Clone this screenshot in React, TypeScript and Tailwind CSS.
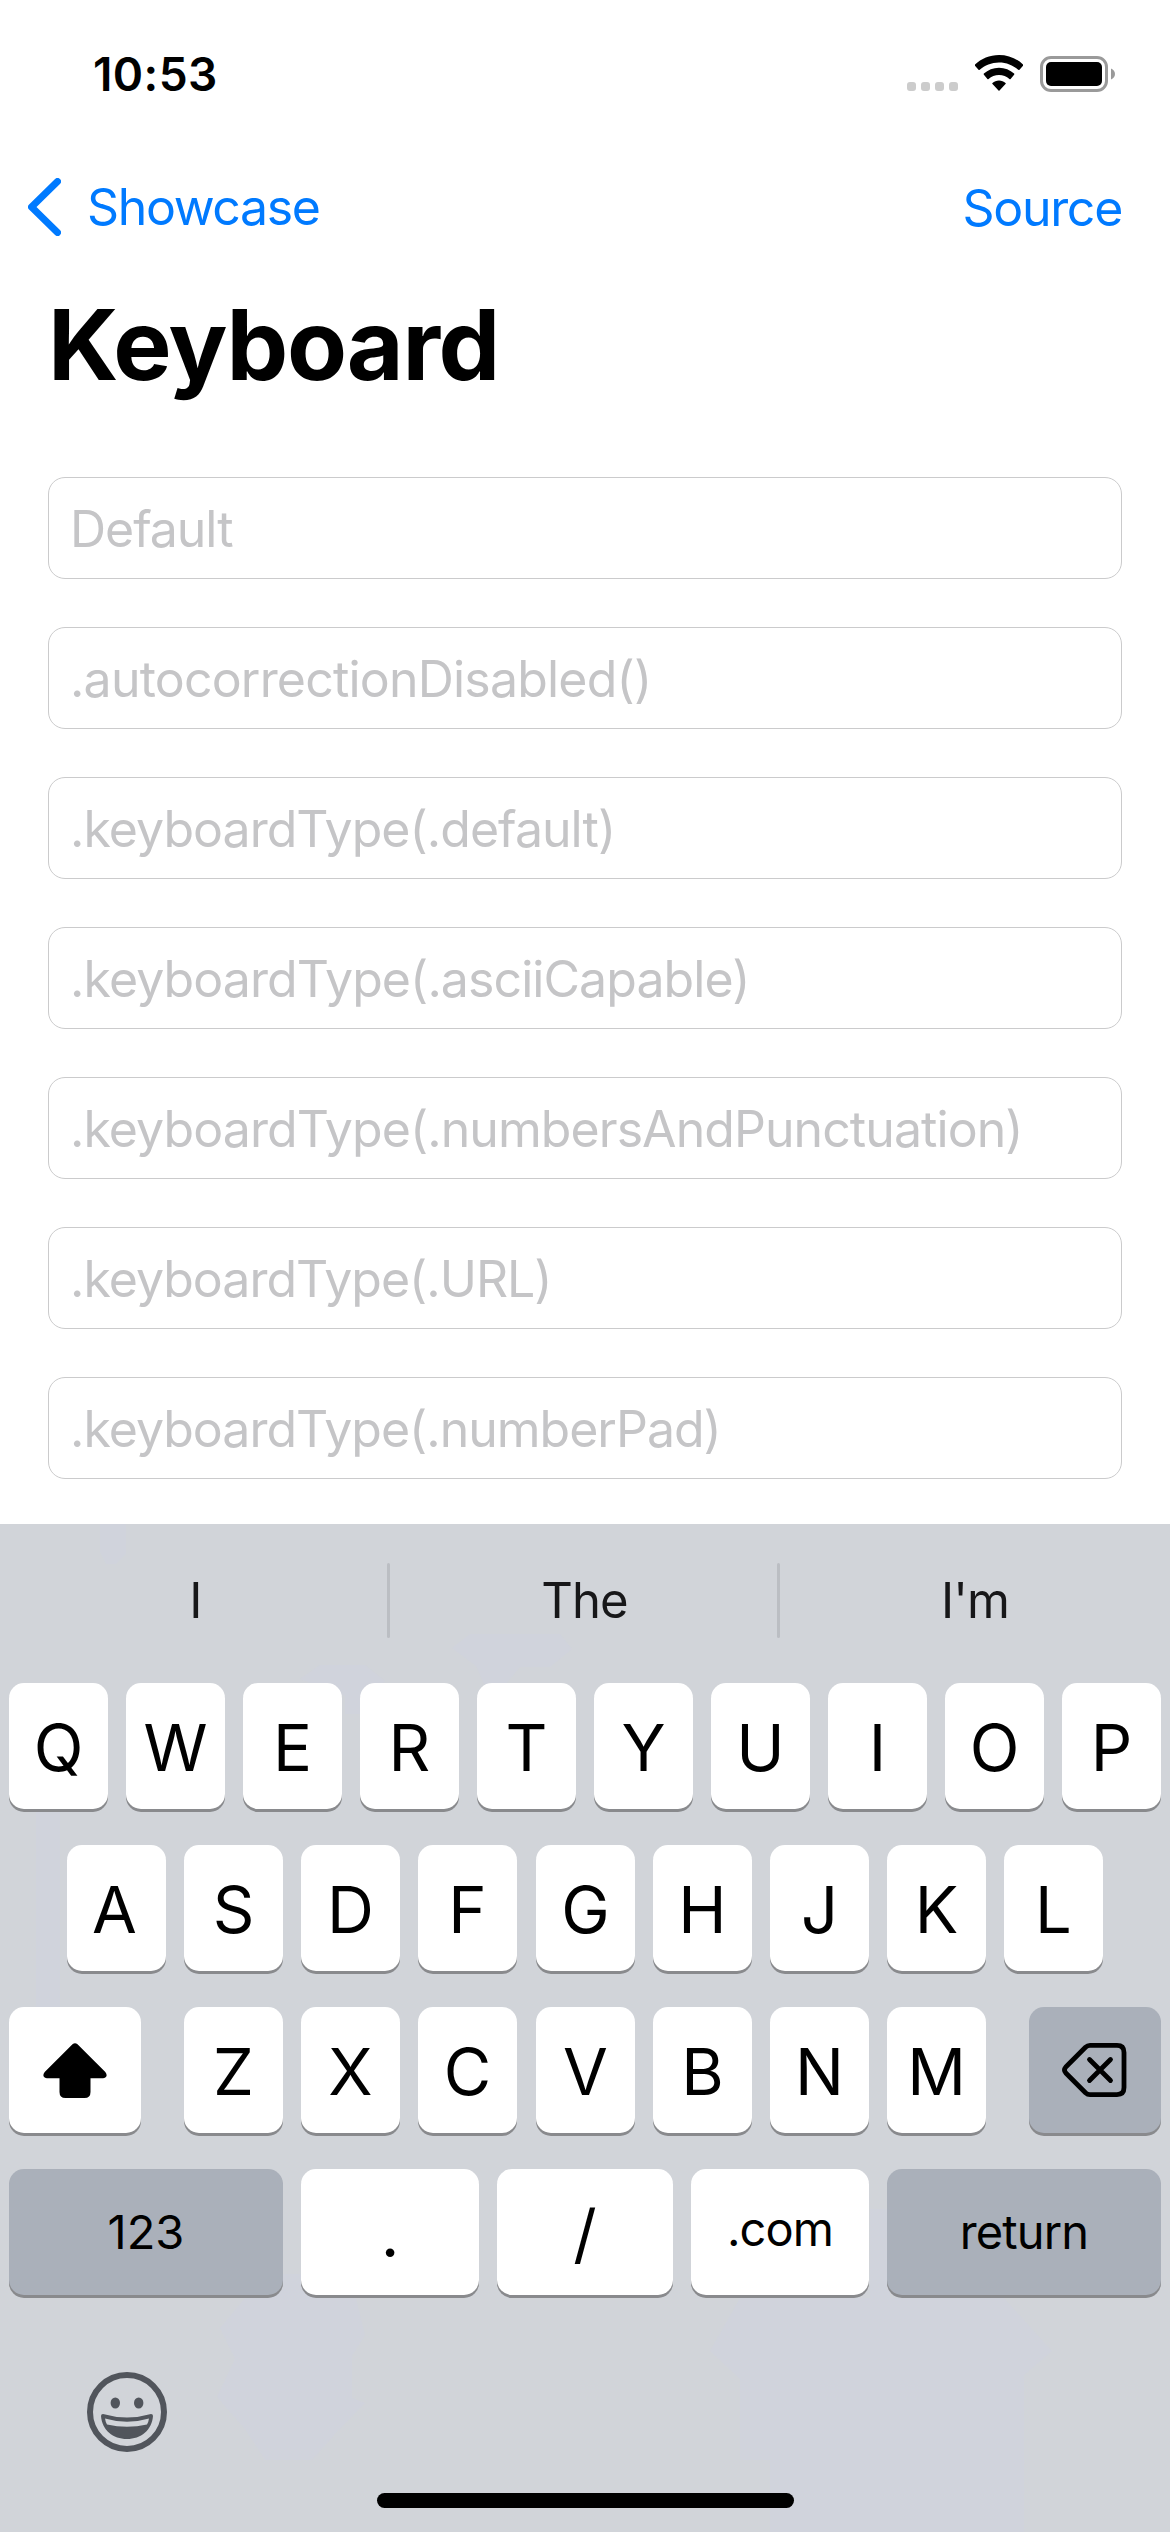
import React from "react";

const fields = [
  { label: "Default", cls: "tracking-[-1.05px]" },
  { label: ".autocorrectionDisabled()", cls: "tracking-[-0.8px]" },
  { label: ".keyboardType(.default)", cls: "tracking-[-0.96px]" },
  { label: ".keyboardType(.asciiCapable)", cls: "tracking-[-0.92px]" },
  { label: ".keyboardType(.numbersAndPunctuation)", cls: "tracking-[-0.93px]" },
  { label: ".keyboardType(.URL)", cls: "tracking-[-1px]" },
  { label: ".keyboardType(.numberPad)", cls: "tracking-[-1px]" },
];

const keyBase =
  "flex h-[126px] shrink-0 items-center justify-center rounded-[15px] shadow-[0_3px_0_#898a8d] text-black leading-none";

function Key({ children, className = "w-[99px]" }: { children: React.ReactNode; className?: string }) {
  return (
    <div className={`${keyBase} bg-white pt-[2px] text-[65px] ${className}`}>
      <span>{children}</span>
    </div>
  );
}

function WifiIcon() {
  return (
    <svg width="48" height="36" viewBox="0 0 48 36" className="mt-[55px] ml-[17px] shrink-0">
      <path d="M24 0C33.300 0 41.800 3.600 48 9.500Q48.600 10.100 48 10.700L44.500 14.800Q43.900 15.400 43.300 14.800C38.200 10.200 31.500 7.400 24 7.400S9.800 10.200 4.700 14.800Q4.100 15.400 3.500 14.800L0 10.700Q-.6 10.100 0 9.500C6.200 3.600 14.700 0 24 0Z" />
      <path d="M24 12.800C29.800 12.800 35.100 15 39.100 18.600Q39.700 19.200 39.100 19.800L35.600 23.900Q35 24.500 34.400 23.900C31.600 21.500 28 20 24 20S16.400 21.500 13.600 23.900Q13 24.500 12.400 23.900L8.900 19.800Q8.300 19.200 8.900 18.600C12.900 15 18.200 12.800 24 12.800Z" />
      <path d="M24 25.500C26.500 25.500 28.800 26.400 30.500 27.900Q31.100 28.500 30.500 29.100L24.500 35.600Q24 36.100 23.500 35.600L17.500 29.100Q16.900 28.500 17.500 27.900C19.200 26.400 21.500 25.500 24 25.500Z" />
    </svg>
  );
}

function BatteryIcon() {
  return (
    <svg width="76" height="36" viewBox="0 0 76 36" className="mt-[56px] ml-[17px] shrink-0">
      <rect x="1.500" y="1.500" width="65" height="33" rx="9.500" fill="none" stroke="#9a9a9a" strokeWidth="3" />
      <rect x="6" y="6" width="56" height="24" rx="5" />
      <path d="M71 12.500C73.500 13.500 75 15.500 75 18S73.500 22.500 71 23.500Z" fill="#9a9a9a" />
    </svg>
  );
}

export default function App() {
  return (
    <div className="flex h-[2532px] w-[1170px] flex-col overflow-hidden bg-white font-['Inter',sans-serif]">
      <div className="flex h-[132px] shrink-0">
        <div className="mt-[46px] ml-[93px] w-[814px] text-[46px] leading-[56px] font-semibold tracking-[0.4px]">10:53</div>
        <div className="mt-[82px] flex gap-[5px]">
          {[0, 1, 2, 3].map((i) => (
            <span key={i} className="h-[9px] w-[9px] rounded-[3px] bg-[#cccccc]" />
          ))}
        </div>
        <WifiIcon />
        <BatteryIcon />
      </div>

      <div className="flex h-[132px] shrink-0 items-start justify-between pr-[48px] pl-[28px] text-[50px] leading-[60px] text-[#007aff]">
        <div className="flex items-start">
          <svg width="33" height="58" viewBox="0 0 33 58" className="mt-[46px]">
            <path d="M29.500 3.500L3.500 29L29.500 54.500" fill="none" stroke="#007aff" strokeWidth="7" strokeLinecap="round" strokeLinejoin="round" />
          </svg>
          <span className="mt-[45px] ml-[26px] tracking-[-1.35px]">Showcase</span>
        </div>
        <span className="mt-[46px] tracking-[-1.3px]">Source</span>
      </div>

      <h1 className="mt-[21px] ml-[48px] h-[120px] shrink-0 text-[98px] leading-[120px] font-bold tracking-[-1.3px]">Keyboard</h1>

      <div className="mt-[72px] flex h-[1047px] shrink-0 flex-col gap-[48px] px-[48px]">
        {fields.map((f) => (
          <div key={f.label} className="flex h-[102px] shrink-0 items-center rounded-[17px] border border-[#cbcbcc] pt-[2px] pl-[21px] text-[50px] leading-[60px] text-[#c5c5c7]">
            <span className={f.cls}>{f.label}</span>
          </div>
        ))}
      </div>

      <div className="relative isolate flex h-[1008px] shrink-0 flex-col overflow-hidden bg-[#d1d4d9]">
        <svg width="1170" height="1008" viewBox="0 0 1170 1008" className="absolute inset-0 -z-10" fill="#d0d3dc">
          <path d="M100 0H126V30L116 40H106L100 28Z" />
          <path d="M452 124L470 110H560L572 125L550 143H520L506 160H484L476 142Z" />
          <path d="M300 155L320 141H365L385 157L370 172V190H345V172Z" />
          <path d="M36 288H60V485H36Z" />
          <path d="M220 804L245 774L270 750H350L365 811L352 832V874L365 879L335 910L312 936H265L245 905L217 873L235 835Z" />
          <path d="M870 685H890V774H1004L1052 827L1024 851V1008H770V936H740V855L710 827L740 774H870Z" />
        </svg>

        <div className="flex h-[159px] shrink-0 items-start pt-[39px] text-[49px] leading-[60px] tracking-[-0.9px] text-[#171719]">
          <span className="mt-[8px] flex w-[387px] justify-center pl-[4px]">I</span>
          <span className="h-[75px] w-[3px] rounded-full bg-[#bbbec3]" />
          <span className="mt-[8px] flex w-[387px] justify-center pl-[2px]">The</span>
          <span className="h-[75px] w-[3px] rounded-full bg-[#bbbec3]" />
          <span className="mt-[8px] flex w-[390px] justify-center">I'm</span>
        </div>

        <div className="flex flex-col gap-[36px]">
          <div className="flex gap-[18px] px-[9px]">
            {"QWERTYUIOP".split("").map((k) => (
              <Key key={k}>{k}</Key>
            ))}
          </div>
          <div className="flex gap-[18px] pl-[67px]">
            {"ASDFGHJKL".split("").map((k) => (
              <Key key={k} className={k === "G" ? "ml-px w-[99px]" : k === "A" ? "w-[99px] pr-[4px]" : "w-[99px]"}>{k}</Key>
            ))}
          </div>
          <div className="flex justify-between px-[9px]">
            <div className={`${keyBase} w-[132px] bg-white`}>
              <svg width="64" height="55" viewBox="0 0 64 55">
                <path d="M29.500 1.300Q32 -.8 34.500 1.300L62.300 29Q65 32.500 62.300 34.500Q61.300 35.200 60 35.200H47.500V49Q47.500 55 41.500 55H22.500Q16.500 55 16.500 49V35.200H4Q2.700 35.200 1.700 34.500Q-1 32.500 1.700 29Z" />
              </svg>
            </div>
            <div className="flex gap-[18px]">
              {"ZXCVBNM".split("").map((k) => (
                <Key key={k} className={k === "V" ? "ml-px w-[99px]" : "w-[99px]"}>{k}</Key>
              ))}
            </div>
            <div className={`${keyBase} w-[132px] bg-[#aab0ba]`}>
              <svg width="65" height="54" viewBox="0 0 65 54" fill="none" stroke="#000" strokeWidth="4.800" strokeLinecap="round" strokeLinejoin="round" className="mr-[2px]">
                <path d="M28 2.400H55Q62 2.400 62 9.400V44.600Q62 51.600 55 51.600H28Q25.500 51.600 23.500 49.700L3.800 30Q1.200 27 3.800 24L23.500 4.300Q25.500 2.400 28 2.400Z" />
                <path d="M27.500 16.500L48.500 37.500M48.500 16.500L27.500 37.500" />
              </svg>
            </div>
          </div>
          <div className="flex gap-[18px] px-[9px]">
            <div className={`${keyBase} w-[274px] bg-[#aab0ba] pb-px text-[47px]`}>123</div>
            <Key className="w-[178px]">.</Key>
            <Key className="w-[176px]">/</Key>
            <div className={`${keyBase} w-[178px] bg-white pb-[8px] text-[47px] tracking-[-0.9px]`}>.com</div>
            <div className={`${keyBase} w-[274px] bg-[#aab0ba] pb-px text-[47px] tracking-[-0.9px]`}>return</div>
          </div>
        </div>

        <svg width="80" height="80" viewBox="0 0 80 80" className="mt-[77px] ml-[87px] shrink-0" fill="#51555c">
          <circle cx="40" cy="40" r="37" fill="none" stroke="#51555c" strokeWidth="6" />
          <ellipse cx="28.300" cy="31" rx="4.700" ry="5.500" />
          <ellipse cx="51.700" cy="31" rx="4.700" ry="5.500" />
          <path fillRule="evenodd" d="M16 42Q40 49 64 42Q66 42 66 44C65 58 54 67 40 67S15 58 14 44Q14 42 16 42ZM18 46.500Q18.500 50 20 52.500Q40 57 60 52.500Q61.500 50 62 46.500Q40 53 18 46.500Z" />
        </svg>
        <div className="mt-[41px] ml-[377px] h-[15px] w-[417px] shrink-0 rounded-full bg-black" />
      </div>
    </div>
  );
}
